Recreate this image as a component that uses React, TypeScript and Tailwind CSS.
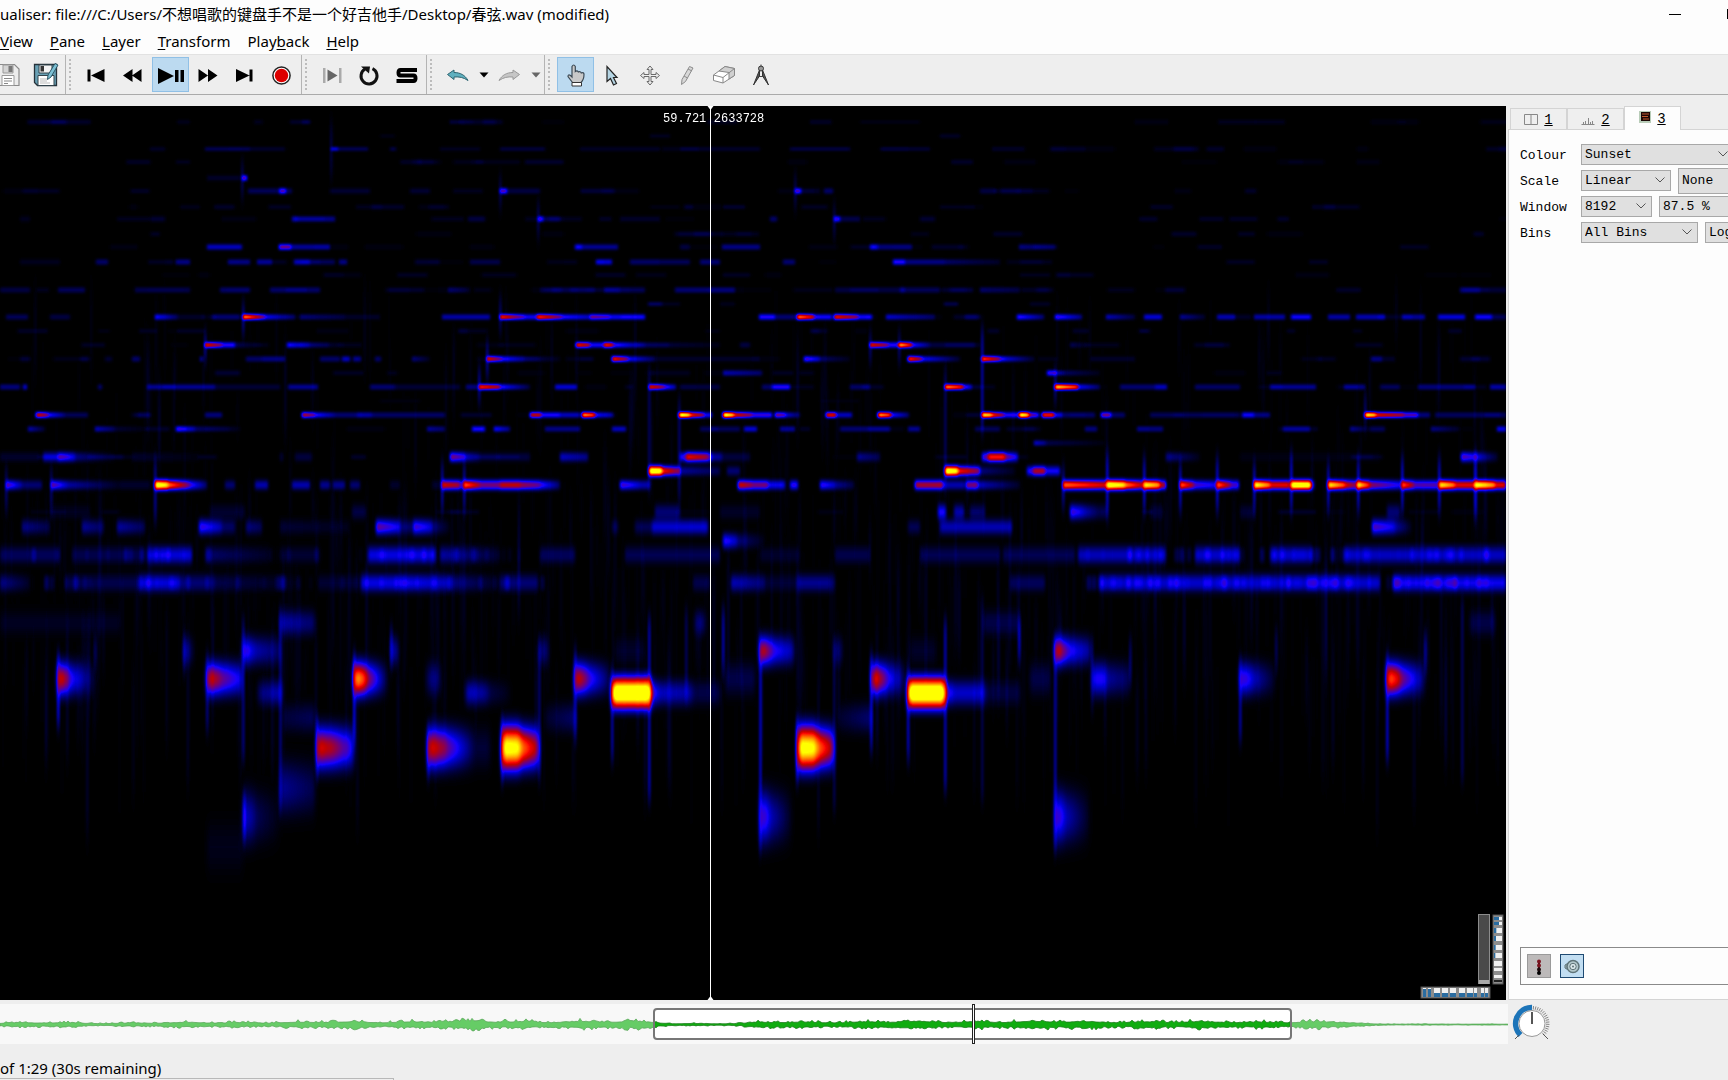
import React, { useState } from 'react';

type Note = [number, number, number, number?];

interface Row {
  y: number;
  spread: number;
  notes: Note[];
}

// Each note is [start, end, level, level at the end]
const ROWS: Row[] = [
  { y: 122, spread: 1, notes: [[40, 65, 0.03], [177, 190, 0.05], [290, 302, 0.08], [302, 310, 0.15], [450, 475, 0.12, 0.03], [860, 920, 0.04]] },
  { y: 136, spread: 1, notes: [[380, 395, 0.04], [650, 670, 0.06], [940, 960, 0.07]] },
  { y: 149, spread: 1, notes: [[150, 165, 0.07], [205, 250, 0.14], [250, 285, 0.08], [331, 338, 0.32], [338, 368, 0.14], [390, 396, 0.12], [440, 480, 0.06], [500, 545, 0.1], [580, 660, 0.07], [680, 760, 0.08], [790, 850, 0.11], [880, 930, 0.09]] },
  { y: 162, spread: 1, notes: [[176, 190, 0.06], [475, 520, 0.05]] },
  { y: 178, spread: 2, notes: [[207, 240, 0.05], [242, 247, 0.35]] },
  { y: 191, spread: 2, notes: [[248, 278, 0.1], [279, 286, 0.34], [286, 292, 0.1], [330, 370, 0.06], [410, 430, 0.06], [500, 507, 0.34], [507, 540, 0.08], [795, 801, 0.32], [801, 820, 0.05], [824, 833, 0.12], [980, 996, 0.08]] },
  { y: 207, spread: 1, notes: [[180, 200, 0.05], [650, 680, 0.04], [723, 745, 0.09], [940, 975, 0.06]] },
  { y: 219, spread: 2, notes: [[20, 30, 0.04], [150, 165, 0.06], [292, 298, 0.2], [298, 335, 0.15], [468, 485, 0.08], [538, 543, 0.3], [543, 560, 0.08], [620, 660, 0.05], [770, 777, 0.12], [834, 840, 0.3], [840, 860, 0.09], [920, 935, 0.06]] },
  { y: 247, spread: 2, notes: [[207, 242, 0.2], [279, 291, 0.38], [291, 330, 0.17], [575, 582, 0.26], [582, 618, 0.16], [680, 690, 0.08], [722, 760, 0.15], [870, 878, 0.24], [878, 912, 0.14], [1019, 1055, 0.15, 0.08]] },
  { y: 262, spread: 2, notes: [[20, 60, 0.04], [96, 108, 0.12], [176, 190, 0.15], [228, 250, 0.15], [257, 272, 0.17], [294, 310, 0.2], [310, 335, 0.1], [339, 347, 0.15], [415, 440, 0.06], [470, 500, 0.09], [596, 612, 0.22], [630, 660, 0.12], [660, 690, 0.1], [700, 720, 0.13], [783, 795, 0.13], [893, 905, 0.28], [905, 945, 0.15], [945, 1000, 0.12, 0.05]] },
  { y: 275, spread: 1, notes: [[723, 750, 0.07], [1020, 1050, 0.06]] },
  { y: 290, spread: 2, notes: [[0, 30, 0.08], [58, 85, 0.1], [135, 190, 0.09], [220, 250, 0.12], [270, 320, 0.12], [448, 470, 0.12, 0.05], [540, 595, 0.08], [604, 620, 0.15], [620, 645, 0.1], [675, 735, 0.13], [835, 900, 0.08], [900, 905, 0.17], [905, 940, 0.1], [980, 1020, 0.12, 0.08], [1165, 1185, 0.06], [1460, 1480, 0.14], [1480, 1506, 0.07]] },
  { y: 304, spread: 1, notes: [[648, 662, 0.16], [662, 680, 0.06], [720, 735, 0.05], [944, 958, 0.13], [1030, 1050, 0.07]] },
  { y: 317, spread: 2, notes: [[6, 28, 0.1], [50, 70, 0.08], [155, 178, 0.27, 0.1], [178, 205, 0.05], [212, 240, 0.12], [243, 265, 0.78, 0.35], [265, 295, 0.26, 0.1], [300, 345, 0.13, 0.08], [345, 380, 0.05], [442, 490, 0.18], [500, 525, 0.62, 0.3], [525, 537, 0.25], [537, 562, 0.65, 0.35], [562, 590, 0.28, 0.2], [590, 610, 0.4, 0.3], [610, 645, 0.24], [759, 775, 0.28], [775, 796, 0.13], [797, 814, 0.75, 0.5], [814, 832, 0.26], [834, 858, 0.6, 0.4], [858, 872, 0.26], [886, 935, 0.22, 0.1], [965, 980, 0.08], [1017, 1044, 0.3, 0.12], [1055, 1082, 0.32, 0.14], [1106, 1135, 0.2, 0.07], [1144, 1162, 0.22], [1180, 1205, 0.17, 0.05], [1217, 1235, 0.19], [1254, 1285, 0.18], [1291, 1311, 0.26], [1328, 1350, 0.18], [1356, 1385, 0.19], [1402, 1425, 0.17], [1438, 1465, 0.23], [1475, 1492, 0.26], [1492, 1506, 0.1]] },
  { y: 331, spread: 1, notes: [[98, 110, 0.04], [177, 205, 0.07], [705, 720, 0.04], [1140, 1148, 0.06], [1287, 1295, 0.07], [1353, 1362, 0.06]] },
  { y: 345, spread: 2, notes: [[205, 222, 0.58, 0.38], [222, 235, 0.28], [235, 262, 0.1, 0.02], [287, 310, 0.28, 0.15], [310, 345, 0.1, 0.02], [576, 590, 0.6, 0.45], [590, 604, 0.26], [604, 613, 0.62, 0.5], [613, 645, 0.3, 0.12], [645, 720, 0.08, 0.03], [740, 750, 0.08], [870, 888, 0.58, 0.4], [888, 899, 0.28], [899, 912, 0.85, 0.5], [912, 930, 0.28, 0.12], [930, 975, 0.08], [1070, 1090, 0.1, 0.02]] },
  { y: 359, spread: 2, notes: [[20, 30, 0.06], [80, 90, 0.06], [105, 112, 0.06], [132, 140, 0.12], [200, 203, 0.18], [246, 262, 0.12], [262, 285, 0.15], [320, 340, 0.12], [342, 350, 0.2], [353, 361, 0.16], [375, 381, 0.12], [412, 430, 0.14, 0.03], [487, 502, 0.58, 0.34], [502, 524, 0.28, 0.16], [524, 560, 0.1, 0.03], [612, 628, 0.62, 0.38], [628, 655, 0.26, 0.1], [655, 760, 0.05], [804, 820, 0.34, 0.2], [820, 850, 0.12, 0.03], [908, 922, 0.66, 0.4], [922, 960, 0.26, 0.05], [982, 1000, 0.66, 0.38], [1000, 1035, 0.26, 0.04], [1090, 1135, 0.05], [1371, 1382, 0.15], [1382, 1395, 0.05], [1460, 1490, 0.06]] },
  { y: 373, spread: 2, notes: [[215, 240, 0.06], [650, 690, 0.04], [723, 762, 0.19, 0.12], [1047, 1056, 0.28], [1056, 1100, 0.13, 0.03]] },
  { y: 387, spread: 2, notes: [[0, 20, 0.14], [23, 27, 0.22], [98, 102, 0.12], [147, 215, 0.16], [215, 280, 0.07], [288, 318, 0.16], [370, 395, 0.13], [395, 460, 0.07], [466, 478, 0.14], [479, 500, 0.62, 0.45], [500, 530, 0.28, 0.07], [555, 577, 0.22], [649, 664, 0.58, 0.4], [664, 676, 0.32, 0.16], [680, 720, 0.08], [762, 772, 0.12], [772, 790, 0.27], [850, 870, 0.12], [945, 963, 0.78, 0.55], [963, 972, 0.32, 0.15], [1055, 1078, 0.88, 0.6], [1078, 1100, 0.26, 0.1], [1120, 1155, 0.13], [1155, 1167, 0.2], [1195, 1240, 0.12], [1270, 1316, 0.16], [1344, 1365, 0.15], [1380, 1400, 0.1], [1418, 1475, 0.14], [1490, 1506, 0.18]] },
  { y: 401, spread: 1, notes: [[380, 420, 0.03], [820, 860, 0.03]] },
  { y: 415, spread: 2, notes: [[36, 48, 0.55, 0.4], [48, 65, 0.28, 0.13], [65, 88, 0.1], [138, 150, 0.07], [205, 222, 0.14], [302, 315, 0.5, 0.35], [315, 335, 0.28, 0.14], [335, 357, 0.12], [357, 372, 0.18], [372, 445, 0.12], [530, 541, 0.5], [541, 560, 0.27], [560, 580, 0.2], [582, 595, 0.8, 0.6], [595, 613, 0.28, 0.14], [679, 690, 1, 0.85], [690, 704, 0.62, 0.4], [704, 712, 0.25], [723, 734, 1, 0.8], [734, 752, 0.56, 0.4], [752, 772, 0.3], [775, 786, 0.42, 0.3], [786, 800, 0.22, 0.1], [826, 836, 0.55], [836, 852, 0.2], [878, 891, 0.82, 0.6], [891, 909, 0.28, 0.12], [982, 992, 0.9, 0.8], [992, 1004, 0.6, 0.4], [1004, 1018, 0.28], [1019, 1029, 1, 0.8], [1029, 1039, 0.4, 0.28], [1042, 1054, 0.58], [1054, 1062, 0.24], [1062, 1095, 0.12], [1101, 1111, 0.38], [1111, 1125, 0.12], [1150, 1240, 0.1], [1242, 1254, 0.26], [1254, 1270, 0.15], [1365, 1376, 0.95, 0.8], [1376, 1404, 0.56, 0.45], [1404, 1418, 0.34], [1418, 1430, 0.14], [1435, 1506, 0.11]] },
  { y: 429, spread: 2, notes: [[28, 45, 0.19, 0.05], [95, 115, 0.2, 0.1], [115, 150, 0.06, 0.02], [176, 195, 0.3, 0.18], [195, 240, 0.12, 0.03], [427, 445, 0.17, 0.12], [472, 485, 0.27], [494, 510, 0.27, 0.14], [545, 580, 0.15], [612, 626, 0.2], [700, 740, 0.1], [744, 757, 0.22], [780, 795, 0.17], [840, 890, 0.13], [908, 920, 0.16], [975, 1000, 0.1], [1085, 1097, 0.14], [1137, 1163, 0.14], [1283, 1310, 0.14], [1350, 1370, 0.17, 0.03], [1370, 1385, 0.1], [1431, 1460, 0.15, 0.04], [1497, 1506, 0.24]] },
  { y: 443, spread: 2, notes: [[1034, 1046, 0.22, 0.14], [1046, 1105, 0.09, 0.02]] },
  { y: 457, spread: 3, notes: [[0, 40, 0.06], [43, 58, 0.22], [58, 75, 0.37, 0.24], [75, 115, 0.16, 0.02], [132, 200, 0.06, 0.02], [280, 283, 0.08], [295, 312, 0.08], [450, 465, 0.44, 0.3], [465, 480, 0.22, 0.12], [480, 530, 0.08], [560, 588, 0.22, 0.16], [680, 686, 0.3], [686, 708, 0.62, 0.48], [708, 712, 0.34], [712, 722, 0.18], [722, 750, 0.08], [857, 880, 0.17, 0.1], [982, 988, 0.35], [988, 1005, 0.65], [1005, 1018, 0.42, 0.24], [1166, 1200, 0.17, 0.03], [1240, 1380, 0.03], [1461, 1480, 0.38, 0.24], [1480, 1498, 0.2, 0.05]] },
  { y: 471, spread: 3, notes: [[649, 662, 1.2, 1], [662, 680, 0.65, 0.42], [680, 720, 0.18, 0.1], [727, 740, 0.14], [945, 958, 1.2, 0.95], [958, 980, 0.65, 0.42], [980, 1015, 0.15, 0.04], [1027, 1033, 0.3], [1033, 1045, 0.52], [1045, 1060, 0.27]] },
  { y: 485, spread: 3, notes: [[6, 22, 0.38, 0.18], [22, 42, 0.14], [51, 68, 0.4, 0.2], [68, 120, 0.19, 0.04], [120, 150, 0.06], [155, 168, 1.2, 0.9], [168, 190, 0.78, 0.38], [190, 207, 0.32, 0.12], [225, 235, 0.14], [255, 268, 0.2], [292, 310, 0.2], [320, 330, 0.17], [333, 345, 0.17], [350, 360, 0.14], [390, 400, 0.06], [432, 442, 0.06], [442, 460, 0.58, 0.48], [460, 464, 0.3], [464, 480, 0.76, 0.48], [480, 500, 0.42], [500, 520, 0.54], [520, 540, 0.48, 0.38], [540, 560, 0.32, 0.12], [620, 640, 0.36, 0.22], [640, 650, 0.2], [738, 752, 0.58, 0.46], [752, 768, 0.42], [768, 785, 0.26], [790, 798, 0.3], [820, 835, 0.32, 0.22], [835, 854, 0.18, 0.08], [915, 943, 0.5], [943, 965, 0.2], [966, 978, 0.42], [978, 1020, 0.22, 0.05], [1063, 1107, 0.76, 0.56], [1107, 1125, 1.2, 0.9], [1125, 1144, 0.8, 0.5], [1144, 1160, 1, 0.8], [1160, 1166, 0.5], [1180, 1194, 0.78, 0.45], [1194, 1217, 0.34, 0.26], [1217, 1231, 0.78, 0.42], [1231, 1239, 0.34], [1254, 1270, 1.1, 0.76], [1270, 1290, 0.6], [1291, 1311, 1.2, 1], [1311, 1314, 0.3], [1328, 1345, 1, 0.7], [1345, 1357, 0.6, 0.4], [1357, 1370, 1, 0.6], [1370, 1402, 0.46, 0.26], [1402, 1414, 0.75, 0.45], [1414, 1438, 0.36], [1439, 1455, 1, 0.75], [1455, 1475, 0.6], [1475, 1495, 1.1, 0.8], [1495, 1506, 0.6]] },
  { y: 512, spread: 4, notes: [[50, 90, 0.05], [210, 245, 0.07], [352, 366, 0.1], [655, 680, 0.16], [720, 760, 0.06], [938, 946, 0.32], [954, 964, 0.22], [970, 985, 0.14], [1070, 1084, 0.4, 0.26], [1084, 1100, 0.24, 0.1], [1100, 1107, 0.12], [1150, 1163, 0.08], [1240, 1255, 0.08], [1387, 1400, 0.16]] },
  { y: 527, spread: 4, notes: [[22, 50, 0.18, 0.1], [82, 104, 0.2, 0.12], [117, 145, 0.21, 0.12], [199, 222, 0.38, 0.22], [222, 235, 0.14], [246, 262, 0.17, 0.12], [280, 350, 0.08, 0.04], [376, 400, 0.46, 0.28], [400, 412, 0.15], [413, 432, 0.4, 0.26], [432, 450, 0.17, 0.03], [612, 618, 0.12], [635, 652, 0.12], [652, 708, 0.26], [908, 920, 0.12], [940, 1012, 0.23], [1372, 1395, 0.42, 0.28], [1395, 1412, 0.22, 0.03]] },
  { y: 541, spread: 4, notes: [[723, 737, 0.36, 0.24], [737, 765, 0.17, 0.03]] },
  { y: 555, spread: 5, notes: [[0, 60, 0.12], [72, 145, 0.1], [147, 192, 0.25], [205, 270, 0.14, 0.05], [280, 320, 0.07], [368, 435, 0.26], [440, 500, 0.2, 0.06], [540, 575, 0.12], [625, 720, 0.11], [760, 800, 0.06], [835, 870, 0.1], [920, 1000, 0.11], [1003, 1075, 0.11], [1078, 1166, 0.22], [1195, 1240, 0.24], [1270, 1312, 0.24], [1344, 1506, 0.23]] },
  { y: 583, spread: 5, notes: [[0, 30, 0.17, 0.05], [65, 140, 0.1], [140, 180, 0.25], [180, 215, 0.15], [215, 300, 0.1, 0.03], [318, 360, 0.07], [361, 400, 0.26], [400, 450, 0.28, 0.22], [450, 500, 0.17, 0.04], [500, 538, 0.15], [693, 710, 0.1], [731, 765, 0.22, 0.14], [765, 830, 0.07], [797, 835, 0.13], [1010, 1045, 0.12], [1099, 1380, 0.24], [1393, 1506, 0.27]] },
  { y: 623, spread: 7, notes: [[0, 120, 0.05], [280, 315, 0.2, 0.14], [695, 705, 0.15], [983, 1020, 0.1], [1470, 1495, 0.1]] },
  { y: 651, spread: 8, notes: [[184, 194, 0.22, 0.04], [243, 254, 0.38, 0.24], [254, 281, 0.22, 0.12], [391, 398, 0.2], [539, 548, 0.15], [615, 645, 0.06], [760, 773, 0.66, 0.35], [773, 794, 0.32, 0.2], [834, 842, 0.14], [910, 936, 0.06], [1055, 1068, 0.66, 0.35], [1068, 1091, 0.32, 0.18]] },
  { y: 679, spread: 9, notes: [[58, 69, 0.72, 0.42], [69, 96, 0.34, 0.02], [207, 220, 0.62, 0.5], [220, 242, 0.45, 0.26], [354, 366, 0.98, 0.72], [366, 388, 0.55, 0.04], [427, 440, 0.15], [575, 588, 0.68, 0.42], [588, 610, 0.36, 0.1], [725, 755, 0.1], [872, 885, 0.72, 0.44], [885, 905, 0.36, 0.1], [1030, 1050, 0.1], [1092, 1106, 0.3], [1106, 1130, 0.2, 0.12], [1240, 1252, 0.38, 0.28], [1252, 1275, 0.24, 0.05], [1387, 1400, 0.85, 0.6], [1400, 1425, 0.48, 0.12]] },
  { y: 693, spread: 7, notes: [[258, 282, 0.14, 0.22], [466, 488, 0.24, 0.17], [488, 510, 0.1, 0.03], [612, 651, 1.6, 1.5], [651, 658, 0.3], [658, 692, 0.23, 0.2], [692, 720, 0.1], [908, 945, 1.6, 1.5], [945, 953, 0.3], [953, 985, 0.24], [985, 1020, 0.09]] },
  { y: 718, spread: 8, notes: [[283, 315, 0.08, 0.12], [545, 576, 0.06, 0.14], [838, 872, 0.06, 0.15]] },
  { y: 748, spread: 11, notes: [[317, 336, 0.66, 0.52], [336, 354, 0.5, 0.28], [428, 446, 0.66, 0.5], [446, 475, 0.45, 0.08], [475, 490, 0.08], [502, 520, 1.3, 1], [520, 539, 0.9, 0.5], [798, 816, 1.3, 1], [816, 834, 0.9, 0.5]] },
  { y: 788, spread: 14, notes: [[280, 315, 0.19, 0.1]] },
  { y: 817, spread: 14, notes: [[243, 255, 0.25, 0.17], [255, 280, 0.12, 0.02], [760, 769, 0.4, 0.3], [769, 792, 0.24, 0.03], [1055, 1064, 0.38, 0.3], [1064, 1090, 0.24, 0.03]] },
  { y: 847, spread: 14, notes: [[207, 243, 0.04]] },
];

// Onset lines: [x, top, bottom, level]
const ONSETS: number[][] = [
  [58, 655, 725, 0.28], [95, 640, 665, 0.14], [184, 636, 670, 0.18], [207, 655, 730, 0.16], [243, 620, 760, 0.16],
  [244, 797, 838, 0.25], [280, 610, 810, 0.15], [317, 720, 775, 0.25], [354, 655, 740, 0.28], [391, 630, 665, 0.22],
  [428, 730, 775, 0.25], [502, 720, 780, 0.25], [539, 640, 780, 0.14], [575, 650, 740, 0.2], [612, 670, 760, 0.2],
  [649, 618, 800, 0.22], [686, 610, 700, 0.12], [723, 610, 670, 0.22], [760, 640, 850, 0.2], [797, 720, 780, 0.3],
  [834, 640, 810, 0.1], [871, 655, 750, 0.24], [908, 670, 760, 0.22], [945, 620, 790, 0.22], [982, 600, 800, 0.1],
  [1019, 622, 660, 0.24], [1055, 640, 850, 0.2], [1092, 640, 710, 0.1], [1130, 640, 680, 0.14], [1240, 660, 740, 0.2],
  [1276, 630, 670, 0.12], [1387, 655, 760, 0.24], [1425, 635, 670, 0.22], [1462, 600, 780, 0.12], [155, 460, 520, 0.18],
  [6, 470, 510, 0.14], [51, 470, 510, 0.14], [442, 465, 510, 0.2], [464, 465, 510, 0.2], [479, 370, 400, 0.2],
  [487, 345, 375, 0.2], [205, 336, 358, 0.22], [243, 306, 332, 0.2], [500, 300, 330, 0.14], [649, 370, 490, 0.12],
  [679, 400, 500, 0.13], [945, 370, 490, 0.12], [982, 330, 430, 0.2], [870, 335, 360, 0.16], [899, 335, 360, 0.16],
  [1055, 370, 400, 0.18], [1063, 470, 505, 0.22], [1107, 455, 515, 0.26], [1144, 460, 510, 0.26], [1180, 465, 510, 0.24],
  [1217, 460, 510, 0.26], [1254, 465, 510, 0.24], [1291, 455, 510, 0.26], [1328, 465, 510, 0.24], [1358, 460, 510, 0.26],
  [1402, 460, 510, 0.24], [1439, 460, 510, 0.26], [1475, 455, 515, 0.28], [1365, 395, 425, 0.14], [242, 165, 195, 0.12],
  [331, 125, 175, 0.08], [500, 180, 205, 0.12], [538, 205, 235, 0.12], [795, 178, 205, 0.12], [834, 208, 235, 0.12],
];

const makeRandom = (start: number) => {
  let seed = start;
  return () => {
    seed = (seed * 16807) % 2147483647;
    return seed / 2147483647;
  };
};

const rand = makeRandom(4211);

const STREAKS = Array.from({ length: 900 }, () => {
  const low = rand() > 0.3;
  const top = low ? 480 + rand() * 200 : 290 + rand() * 240;
  return [rand() * 1506, top, top + 25 + rand() * (low ? 130 : 70), 0.005 + rand() * rand() * 0.04];
});

// Grain inside the two broad bands
const GRAIN = Array.from({ length: 260 }, () => {
  const y = rand() > 0.4 ? 583 : 555;
  const x = rand() > 0.35 ? 1085 + rand() * 421 : rand() * 560;
  return [x, y - 7, y + 7, rand() * 0.07];
});

const HAZE_ROWS = [122, 149, 162, 191, 207, 219, 234, 247, 262, 275, 290, 290, 317, 331, 345, 359, 373, 387, 415, 429, 457, 512];
const HAZE = Array.from({ length: 300 }, (_, i) => {
  const x = rand() * 1500;
  return [x, HAZE_ROWS[i % HAZE_ROWS.length], 8 + rand() * 32, 0.01 + rand() * 0.032];
});

const clamp = (n: number) => Math.max(0, Math.min(1, n));
// The colour scale tops out at 80% so that loud notes saturate to yellow
const LEVELS = Array.from({ length: 81 }, (_, i) => i / 64);
const RED = LEVELS.map(n => clamp((n - 0.24) * 2.38).toFixed(3)).join(' ');
const GREEN = LEVELS.map(n => clamp((n - 0.64) * 2.777).toFixed(3)).join(' ');
const BLUE = LEVELS.map(n => clamp(n > 0.277 ? 2 - n * 3.6 : n * 3.6).toFixed(3)).join(' ');

// Quiet notes are pulled down a little further than loud ones
const opacityOf = (v: number) => clamp(v * 0.96 * Math.min(1, 0.7 + v));

const BLURS = [1, 2, 3, 4, 5, 7, 8, 9, 11, 14];

const Spectrogram = () => (
  <svg className="block h-full w-full" viewBox="0 106 1506 894" preserveAspectRatio="none" aria-label="Spectrogram">
    <defs>
      <filter id="sunset" x="0" y="106" width="1506" height="894" filterUnits="userSpaceOnUse" colorInterpolationFilters="sRGB">
        <feComponentTransfer>
          <feFuncR type="table" tableValues={RED} />
          <feFuncG type="table" tableValues={GREEN} />
          <feFuncB type="table" tableValues={BLUE} />
        </feComponentTransfer>
      </filter>
      {BLURS.map(s => (
        <filter key={s} id={`blur${s}`} x="-20" y="80" width="1546" height="940" filterUnits="userSpaceOnUse" colorInterpolationFilters="sRGB">
          <feGaussianBlur stdDeviation={`${s > 6 ? 2 : 1.5} ${s === 1 ? 1.4 : s === 2 ? 1.8 : s === 3 ? 2.7 : s}`} />
        </filter>
      ))}
      <filter id="streak" x="-20" y="80" width="1546" height="940" filterUnits="userSpaceOnUse" colorInterpolationFilters="sRGB">
        <feGaussianBlur stdDeviation="0.8 16" />
      </filter>
      <filter id="onset" x="-20" y="80" width="1546" height="940" filterUnits="userSpaceOnUse" colorInterpolationFilters="sRGB">
        <feGaussianBlur stdDeviation="0.9 9" />
      </filter>
      {ROWS.map(row => row.notes.map(([x, end, v, w = v]) => (
        <linearGradient key={`${row.y}-${x}`} id={`g${row.y}-${x}`}>
          <stop offset="0" stopColor="#fff" stopOpacity={opacityOf(v)} />
          <stop offset="1" stopColor="#fff" stopOpacity={opacityOf(w)} />
        </linearGradient>
      )))}
    </defs>
    <g filter="url(#sunset)">
      <rect x="0" y="106" width="1506" height="894" fill="#000" />
      <g filter="url(#streak)">
        {STREAKS.map(([x, y1, y2, v], i) => (
          <rect key={i} x={x} y={y1} width="2.4" height={y2 - y1} fill="#fff" opacity={v} />
        ))}
      </g>
      <g filter="url(#blur2)">
        {HAZE.map(([x, y, w, v], i) => (
          <rect key={i} x={x} y={y - 2} width={w} height="4" fill="#fff" opacity={v} />
        ))}
      </g>
      <g filter="url(#onset)">
        {ONSETS.map(([x, y1, y2, v], i) => (
          <rect key={i} x={x - 1} y={y1} width="2.6" height={y2 - y1} fill="#fff" opacity={v * 0.7} />
        ))}
      </g>
      {BLURS.map(s => (
        <g key={s} filter={`url(#blur${s})`}>
          {ROWS.filter(row => row.spread === s).map(row => row.notes.map(([x, end, v]) => {
            const h = s * 2.4 * Math.max(1, v * 0.9);
            return <rect key={`${row.y}-${x}`} x={x} y={row.y - h / 2} width={end - x} height={h} fill={`url(#g${row.y}-${x})`} />;
          }))}
        </g>
      ))}
      <g filter="url(#blur3)">
        {GRAIN.map(([x, y1, y2, v], i) => (
          <rect key={i} x={x} y={y1} width="4" height={y2 - y1} fill="#fff" opacity={v} />
        ))}
      </g>
    </g>
  </svg>
);

// Half height of the overview wave form at a few points along it
const ENVELOPE = [[0, 2], [45, 3], [100, 2], [200, 3], [280, 3.2], [350, 4], [450, 4.6], [560, 4.6], [652, 4], [662, 3], [672, 1.6], [740, 1.4], [758, 3.6], [850, 4], [970, 4.6], [1080, 4.4], [1180, 4], [1290, 4], [1340, 3.5], [1375, 0.8], [1508, 0.5]];

const envelopeAt = (x: number) => {
  const i = Math.max(1, ENVELOPE.findIndex(p => p[0] >= x));
  const [x0, a0] = ENVELOPE[i - 1];
  const [x1, a1] = ENVELOPE[i];
  return a0 + ((a1 - a0) * (x - x0)) / (x1 - x0);
};

const waveRandom = makeRandom(977);
const WAVE = Array.from({ length: 755 }, (_, i) => {
  const x = i * 2;
  const a = envelopeAt(x) * (0.9 + 0.15 * Math.sin(x / 9) + 0.1 * Math.sin(x / 23));
  return { x, up: a * (0.6 + waveRandom() ** 3 * 0.7), down: a * (0.6 + waveRandom() ** 2 * 0.7) };
});

const wavePath = (from: number, to: number) => {
  const part = WAVE.filter(p => p.x >= from && p.x <= to);
  const top = part.map(p => `${p.x} ${(20.5 - p.up).toFixed(1)}`);
  const bottom = part.slice().reverse().map(p => `${p.x} ${(20.5 + p.down).toFixed(1)}`);
  return `M${top.join('L')}L${bottom.join('L')}Z`;
};

const Overview = () => (
  <svg className="block h-10 w-full bg-[#f8f8f8]" viewBox="0 0 1508 40" preserveAspectRatio="none" aria-label="Overview">
    <path d={wavePath(0, 654)} fill="#66cc66" stroke="#5aa85a" strokeWidth="0.8" />
    <path d={wavePath(1290, 1508)} fill="#66cc66" stroke="#5aa85a" strokeWidth="0.8" />
    <rect x="654" y="5" width="637" height="30" rx="3" fill="#fff" />
    <path d={wavePath(654, 1290)} fill="#10ac10" stroke="#1c7c1c" strokeWidth="0.8" />
    <rect x="654" y="5" width="637" height="30" rx="3" fill="none" stroke="#777" strokeWidth="2" />
    <rect x="972.500" y="0.500" width="2" height="39" fill="#fff" stroke="#222" strokeWidth="1" />
  </svg>
);

const Icon = ({ width = 24, children }: { width?: number; children: React.ReactNode }) => (
  <svg width={width} height="24" viewBox={`0 0 ${width} 24`} fill="none" aria-hidden="true">{children}</svg>
);

interface ToolProps {
  label: string;
  active?: boolean;
  onClick?: () => void;
  children: React.ReactNode;
}

const Tool = ({ label, active, onClick, children }: ToolProps) => (
  <button
    type="button"
    aria-label={label}
    onClick={onClick}
    className={`flex h-[35px] w-[37px] shrink-0 items-center justify-center border ${active ? 'border-[#90c0e6] bg-[#bcdaf0]' : 'border-transparent'}`}
  >
    {children}
  </button>
);

const DropTool = ({ label, color }: { label: string; color: string }) => (
  <button type="button" aria-label={label} className="flex w-[15px] shrink-0 items-center justify-center">
    <svg width="10" height="6" viewBox="0 0 10 6" aria-hidden="true"><path d="M0.5 0.5h9L5 5.5z" fill={color} /></svg>
  </button>
);

const ToolGroup = ({ handle = true, last = false, children }: { handle?: boolean; last?: boolean; children: React.ReactNode }) => (
  <div className={`flex items-center ${last ? '' : 'border-r border-[#b4b4b4] pr-px'}`}>
    {handle && (
      <div className="flex h-8 w-3 flex-col items-center justify-between pr-1">
        {[0, 1, 2, 3, 4, 5, 6, 7].map(i => <span key={i} className="h-0.5 w-0.5 bg-[#bcbcbc]" />)}
      </div>
    )}
    {children}
  </div>
);

const Toolbar = () => {
  const [playing, setPlaying] = useState(true);
  const [tool, setTool] = useState('navigate');

  return (
    <div className="flex h-[41px] shrink-0 border-t border-b border-t-[#e2e2e2] border-b-[#aaaaaa] bg-[#eeeeee]">
      <div className="-ml-2.5 flex">
        <ToolGroup handle={false}>
          <Tool label="Save">
            <Icon>
              <path d="M1.5 1.5h16l4.500 4.500v16.500h-20z" fill="#ececec" stroke="#8a8a8a" strokeWidth="1.2" />
              <path d="M6 2h10v8H6z" fill="#d4d4d4" stroke="#9a9a9a" />
              <path d="M11.500 3h4v6h-4z" fill="#777" />
              <path d="M5 12.500h12v10H5z" fill="#fff" stroke="#999" />
              <path d="M7 15.500h8M7 18h8M7 20.500h4" stroke="#888" />
            </Icon>
          </Tool>
          <Tool label="Save as">
            <Icon width={26}>
              <path d="M1.500 1.500h22v21h-19l-3-3z" fill="#69a0b4" stroke="#26323a" strokeWidth="1.300" />
              <path d="M6 2h13v8H6z" fill="#f4f4f4" stroke="#33444c" />
              <path d="M7.500 3h3.500v5.500H7.500z" fill="#333" />
              <path d="M5 12.500h16v10H5z" fill="#fff" stroke="#33444c" />
              <path d="M7 16h8M7 18h7M7 20h10" stroke="#bbb" />
              <path d="M22 0.500l3 1.500-7 12-3.500 2.500 0.500-4.500z" fill="#7cc0d4" stroke="#2c5564" />
            </Icon>
          </Tool>
        </ToolGroup>
        <ToolGroup>
          <Tool label="Rewind to start"><Icon><path d="M2.500 6.500h3v12h-3zM19.500 6v13L6 12.500z" fill="#000" /></Icon></Tool>
          <Tool label="Rewind"><Icon><path d="M10.500 6v13L1 12.500zM19.500 6v13L10 12.500z" fill="#000" /></Icon></Tool>
          <Tool label="Play / pause" active={playing} onClick={() => setPlaying(p => !p)}>
            <Icon width={28}><path d="M1 5v16l16-8zM18 7h3.500v12H18zM23.500 7H27v12h-3.500z" fill="#000" /></Icon>
          </Tool>
          <Tool label="Fast forward"><Icon><path d="M2.500 6v13l9.500-6.500zM12 6v13l9.500-6.500z" fill="#000" /></Icon></Tool>
          <Tool label="Fast forward to end"><Icon><path d="M3 6v13l13.500-6.500zM16.500 6.500h3v12h-3z" fill="#000" /></Icon></Tool>
          <Tool label="Record">
            <Icon>
              <circle cx="11.500" cy="12.500" r="8.600" fill="#fff" stroke="#222" strokeWidth="1.500" />
              <circle cx="11.500" cy="12.500" r="6.700" fill="#dd0000" />
            </Icon>
          </Tool>
        </ToolGroup>
        <ToolGroup>
          <Tool label="Constrain playback to selection">
            <Icon>
              <path d="M2 5h2.500v15H2zM18 5h2.500v15H18z" fill="#aaa" />
              <path d="M6.500 6.500v12l10-6z" fill="#666" />
            </Icon>
          </Tool>
          <Tool label="Loop playback">
            <Icon>
              <path d="M14.500 5.700a8 8 0 1 1-7.500 0.300" stroke="#111" strokeWidth="3" />
              <path d="M3 3.500h9l-1 7z" fill="#111" />
            </Icon>
          </Tool>
          <Tool label="Solo current pane">
            <Icon><path d="M22 7H5.500Q3.500 7 3.500 9.700 3.500 12.500 5.500 12.500H18.500Q20.500 12.500 20.500 15.200 20.500 18 18.500 18H1.500" stroke="#000" strokeWidth="4" /></Icon>
          </Tool>
        </ToolGroup>
        <ToolGroup>
          <Tool label="Undo">
            <Icon><path d="M1.500 11.500l6.500-4.500v2.500c6 0 11 2.500 14 8-4.500-3-8.500-4-14-3.500v2.500z" fill="#5fb0bf" stroke="#2f6470" /></Icon>
          </Tool>
          <DropTool label="Undo history" color="#000" />
          <Tool label="Redo">
            <Icon><path d="M21.500 11.500l-6.500-4.500v2.500c-6 0-11 2.500-14 8 4.500-3 8.500-4 14-3.500v2.500z" fill="#c6c6c6" stroke="#999" /></Icon>
          </Tool>
          <DropTool label="Redo history" color="#666" />
        </ToolGroup>
        <ToolGroup last>
          <Tool label="Navigate" active={tool === 'navigate'} onClick={() => setTool('navigate')}>
            <Icon>
              <path d="M8.500 19.500L4 13.500q0-2.500 2.500-1l1.500 1.500V3.500q1.700-3 3.300 0V8.500q2-1.500 3 0.500 2-1 3 1 2.700-1 2.700 1.500 0 5-3 8z" fill="#c9c9c9" stroke="#3c4a55" strokeWidth="1.200" />
              <path d="M8 19.500h9.500v3.500H8z" fill="#fff" stroke="#333" />
            </Icon>
          </Tool>
          <Tool label="Select" active={tool === 'select'} onClick={() => setTool('select')}>
            <Icon><path d="M6 3.500v15l3.500-3 3 6.500 3-1.500-3-6H16z" fill="#b5d5e4" stroke="#222" strokeWidth="1.200" /></Icon>
          </Tool>
          <Tool label="Edit" active={tool === 'edit'} onClick={() => setTool('edit')}>
            <Icon>
              <path d="M12 3l3 3.500h-2V11.500h5V9.500l3.500 3-3.500 3v-2h-5v5h2L12 22l-3-3.500h2v-5H6v2l-3.500-3 3.500-3v2h5v-5H9z" fill="#eee" stroke="#6a6a6a" />
            </Icon>
          </Tool>
          <Tool label="Draw" active={tool === 'draw'} onClick={() => setTool('draw')}>
            <Icon><path d="M14.500 3.500l3.500 1.500-7.500 13.500-4 3 0.500-5zM9 13l3.500 2M13 6l4 2" fill="#d8d8d8" stroke="#8c8c8c" /></Icon>
          </Tool>
          <Tool label="Erase" active={tool === 'erase'} onClick={() => setTool('erase')}>
            <Icon>
              <path d="M1.500 12L13 3.500l9.500 2v7L11 20l-9.500-2.500z" fill="#fff" stroke="#888" />
              <path d="M7 8L13 3.500l9.500 2v7L17 16V9.500z" fill="#d0d0d0" stroke="#888" />
              <path d="M1.500 12l9.500 2.500V20M11 14.500l11.500-9" stroke="#888" />
            </Icon>
          </Tool>
          <Tool label="Measure" active={tool === 'measure'} onClick={() => setTool('measure')}>
            <Icon>
              <path d="M10.500 7L4.500 22l6-9zM13.500 7l6 15-6-9z" fill="#555" stroke="#333" />
              <circle cx="12" cy="5.500" r="2.500" fill="#999" stroke="#333" />
              <path d="M12 1.500v2M9 13.500h6" stroke="#444" />
            </Icon>
          </Tool>
        </ToolGroup>
      </div>
    </div>
  );
};

const MENUS = [
  { before: '', key: 'V', after: 'iew' },
  { before: '', key: 'P', after: 'ane' },
  { before: '', key: 'L', after: 'ayer' },
  { before: '', key: 'T', after: 'ransform' },
  { before: 'Play', key: 'b', after: 'ack' },
  { before: '', key: 'H', after: 'elp' },
];

interface DropDownProps {
  id: string;
  label: string;
  value: string;
  className: string;
}

const DropDown = ({ id, label, value, className }: DropDownProps) => (
  <div className={`relative shrink-0 ${className}`}>
    <select id={id} aria-label={label} className="block h-full w-full appearance-none border border-[#a8a8a8] bg-[#e0e0e0] pl-[3px] text-[13px]">
      <option>{value}</option>
    </select>
    <svg className="pointer-events-none absolute top-1/2 right-1.5 -mt-1" width="10" height="6" viewBox="0 0 10 6" fill="none" aria-hidden="true">
      <path d="M0.500 0.500L5 5l4.500-4.500" stroke="#555" />
    </svg>
  </div>
);

const LabelledRow = ({ id, label, children }: { id: string; label: string; children: React.ReactNode }) => (
  <div className="flex h-[21px] items-center">
    <label htmlFor={id} className="w-[61px] shrink-0 pt-0.5">{label}</label>
    <div className="flex items-center gap-[7px]">{children}</div>
  </div>
);

const TABS = [
  {
    id: '1',
    icon: <svg width="14" height="11" viewBox="0 0 14 11" fill="none" aria-hidden="true"><path d="M0.500 0.500h13v10H0.500zM7 0.500v10" stroke="#888" /></svg>,
  },
  {
    id: '2',
    icon: <svg width="14" height="11" viewBox="0 0 14 11" fill="none" aria-hidden="true"><path d="M0.500 10.500h13M2.500 8v3M4.500 7v4M7.500 4v7M9.500 8v3M11.500 7v4" stroke="#888" /></svg>,
  },
  {
    id: '3',
    icon: (
      <svg className="-mt-1" width="12" height="12" viewBox="0 0 12 12" aria-hidden="true">
        <rect width="12" height="12" fill="#b8ccb8" />
        <rect x="2" y="1" width="9" height="9" fill="#1c0806" />
        <path d="M3 3h7M3 5.500h6M4 8h6" stroke="#c0582c" />
      </svg>
    ),
  },
];

const LayerPanel = () => {
  const [tab, setTab] = useState('3');

  return (
    <aside className="flex w-[222px] shrink-0 flex-col overflow-hidden pl-0.5">
      <div role="tablist" className="flex h-6 shrink-0 items-end pl-0.5">
        {TABS.map(t => (
          <button
            key={t.id}
            type="button"
            role="tab"
            aria-selected={tab === t.id}
            onClick={() => setTab(t.id)}
            className={`flex w-[57px] items-center justify-center gap-1.5 border border-b-0 border-[#d4d4d4] text-[14px] ${tab === t.id ? 'z-10 h-6 bg-[#fdfdfd]' : 'h-[22px] bg-[#efefef]'}`}
          >
            {t.icon}
            <span className="pt-0.5 underline">{t.id}</span>
          </button>
        ))}
      </div>
      <div className="-mt-px flex flex-1 flex-col overflow-hidden border border-r-0 border-[#d4d4d4] bg-[#fdfdfd] pl-[11px]">
        <div className="flex flex-col gap-[5px] pt-3.5">
          <LabelledRow id="colour" label="Colour">
            <DropDown id="colour" label="Colour" value="Sunset" className="h-[21px] w-[153px]" />
          </LabelledRow>
          <LabelledRow id="scale" label="Scale">
            <DropDown id="scale" label="Scale" value="Linear" className="h-[21px] w-[90px]" />
            <DropDown id="normalisation" label="Normalisation" value="None" className="h-[26px] w-[90px]" />
          </LabelledRow>
          <LabelledRow id="window" label="Window">
            <DropDown id="window" label="Window" value="8192" className="h-[21px] w-[71px]" />
            <DropDown id="overlap" label="Overlap" value="87.5 %" className="h-[21px] w-[90px]" />
          </LabelledRow>
          <LabelledRow id="bins" label="Bins">
            <DropDown id="bins" label="Bins" value="All Bins" className="h-[21px] w-[117px]" />
            <DropDown id="frequency" label="Frequency scale" value="Log" className="h-[21px] w-[90px]" />
          </LabelledRow>
        </div>
        <div className="mt-auto mb-3.5 flex h-[38px] items-center gap-[9px] border border-r-0 border-[#8a8a8a] pl-1.5">
          <button type="button" aria-label="Show layer" className="flex h-6 w-6 items-center justify-center border border-[#9a9a9a] bg-[#bdbaba]">
            <svg width="6" height="18" viewBox="0 0 6 18" aria-hidden="true">
              <path d="M3 3v14" stroke="#3a0c10" strokeWidth="2" />
              <circle cx="3" cy="4.500" r="2" fill="#7c1420" />
              <circle cx="3" cy="8.500" r="2" fill="#7c1420" />
              <circle cx="3" cy="12.500" r="2" fill="#1c0a0c" />
              <circle cx="3" cy="16" r="2" fill="#000" />
            </svg>
          </button>
          <button type="button" aria-label="Play layer" className="flex h-6 w-6 items-center justify-center border border-[#1f4a72] bg-[#c2def2]">
            <svg width="18" height="18" viewBox="0 0 18 18" fill="none" aria-hidden="true">
              <path d="M2 8l5-3v9l-5-3z" fill="#9db0b4" stroke="#5f7478" />
              <circle cx="10" cy="9.500" r="6" fill="#b4c8cc" stroke="#5f7478" strokeWidth="1.500" />
              <circle cx="10" cy="9.500" r="3.200" fill="#dce8ea" stroke="#5f7478" />
              <circle cx="10" cy="9.500" r="1" fill="#5f7478" />
            </svg>
          </button>
        </div>
      </div>
    </aside>
  );
};

const WHEEL_V = [3, 8, 14, 22, 31, 39, 47, 54, 61];
const WHEEL_H = [3, 8, 14, 22, 30, 39, 47, 54, 61, 65];

const ThumbWheels = () => (
  <svg className="absolute right-0.5 bottom-0" width="84" height="86" viewBox="0 0 84 86" aria-hidden="true">
    <rect x="58.500" y="0.500" width="11" height="69" fill="#4a4a4a" stroke="#8c8c8c" />
    <rect x="59" y="66" width="10" height="4" fill="#a8a8a8" />
    <rect x="73" y="1" width="10" height="69" fill="#8c8c8c" stroke="#555" />
    {WHEEL_V.map((y, i) => (
      <g key={y}>
        <rect x="74" y={y} width="8" height={i > 1 && i < 7 ? 5 : 3} fill="#f0f0f0" />
        {i < 6 && <rect x="74" y={y} width={i < 2 ? 5 : 3 - i / 3} height={i > 1 ? 5 : 3} fill="#2a6ca0" />}
      </g>
    ))}
    <rect x="74" y="66" width="8" height="2" fill="#222" />
    <rect x="1" y="73" width="69" height="11" fill="#8c8c8c" stroke="#555" />
    {WHEEL_H.map((x, i) => (
      <g key={x}>
        <rect x={x} y="74" width={i > 1 && i < 7 ? 6 : 3} height="9" fill="#f0f0f0" />
        <rect x={x} y={i < 2 ? 75 : 79} width={i > 1 && i < 7 ? 6 : 3} height={i < 2 ? 8 : 4} fill="#2a6ca0" />
      </g>
    ))}
  </svg>
);

const TICKS = Array.from({ length: 17 }, (_, i) => (-85 + i * 8) * (Math.PI / 180));

const SpeedDial = () => (
  <svg width="40" height="40" viewBox="0 0 40 40" fill="none" role="img" aria-label="Playback speed">
    <path d="M8.500 31A16 16 0 0 1 20 3.500" stroke="#1c74b8" strokeWidth="5.500" />
    {TICKS.map(a => (
      <path
        key={a}
        d={`M${20 + 14 * Math.cos(a)} ${19.5 + 14 * Math.sin(a)}L${20 + 17.5 * Math.cos(a)} ${19.5 + 17.5 * Math.sin(a)}`}
        stroke="#888"
      />
    ))}
    <circle cx="20" cy="19.500" r="13" fill="#fff" stroke="#999" />
    <path d="M20 8v12" stroke="#555" strokeWidth="2" />
    <path d="M7 31l-4 4M31 30l5 5" stroke="#555" />
  </svg>
);

const App: React.FC = () => {
  return (
    <div className="flex h-screen flex-col overflow-hidden bg-[#eeeeee] font-['Noto_Sans','Noto_Sans_CJK_SC',sans-serif] text-black">
      {/* Title bar */}
      <header className="flex h-7 shrink-0 items-center justify-between bg-[#fdfdfd]">
        <h1 className="text-[15px] whitespace-nowrap">ualiser: file:///C:/Users/不想唱歌的键盘手不是一个好吉他手/Desktop/春弦.wav (modified)</h1>
        <div className="flex items-center gap-[46px]">
          <button type="button" aria-label="Minimise" className="flex h-6 w-3 items-center"><span className="h-px w-3 bg-black" /></button>
          <button type="button" aria-label="Maximise" className="h-2.5 w-px bg-black" />
        </div>
      </header>

      {/* Menu bar */}
      <nav className="flex h-[26px] shrink-0 items-center gap-[17px] bg-[#fdfdfd] text-[15px]">
        {MENUS.map(m => (
          <button key={m.key} type="button">
            {m.before}<span className="underline underline-offset-2">{m.key}</span>{m.after}
          </button>
        ))}
      </nav>

      <Toolbar />

      {/* Pane and layer properties */}
      <main className="flex min-h-0 flex-1 pt-[11px] font-['Liberation_Mono',monospace] text-[13px]">
        <section className="relative min-w-0 flex-1 bg-black">
          <Spectrogram />
          <div className="absolute inset-y-0 left-[47.15%] flex w-px flex-col items-center justify-between bg-white">
            <svg width="7" height="4" viewBox="0 0 7 4" className="shrink-0" aria-hidden="true"><path d="M0.500 0h6l-3 4z" fill="#fff" /></svg>
            <svg width="7" height="4" viewBox="0 0 7 4" className="shrink-0" aria-hidden="true"><path d="M0.500 4h6l-3-4z" fill="#fff" /></svg>
          </div>
          <div className="absolute top-1 right-[53.1%] text-[12px] text-white">59.721</div>
          <div className="absolute top-1 left-[47.4%] text-[12px] text-white">2633728</div>
          <ThumbWheels />
        </section>
        <LayerPanel />
      </main>

      {/* Overview and playback speed */}
      <div className="flex h-11 shrink-0 items-end">
        <div className="min-w-0 flex-1"><Overview /></div>
        <div className="w-[220px] shrink-0 pl-1"><SpeedDial /></div>
      </div>

      <footer className="flex h-9 shrink-0 flex-col justify-end text-[15px] leading-5">
        <p>of 1:29 (30s remaining)</p>
        <div className="h-0.5 w-[394px] border-t border-r border-[#b8b8b8]" />
      </footer>
    </div>
  );
};

export default App;
